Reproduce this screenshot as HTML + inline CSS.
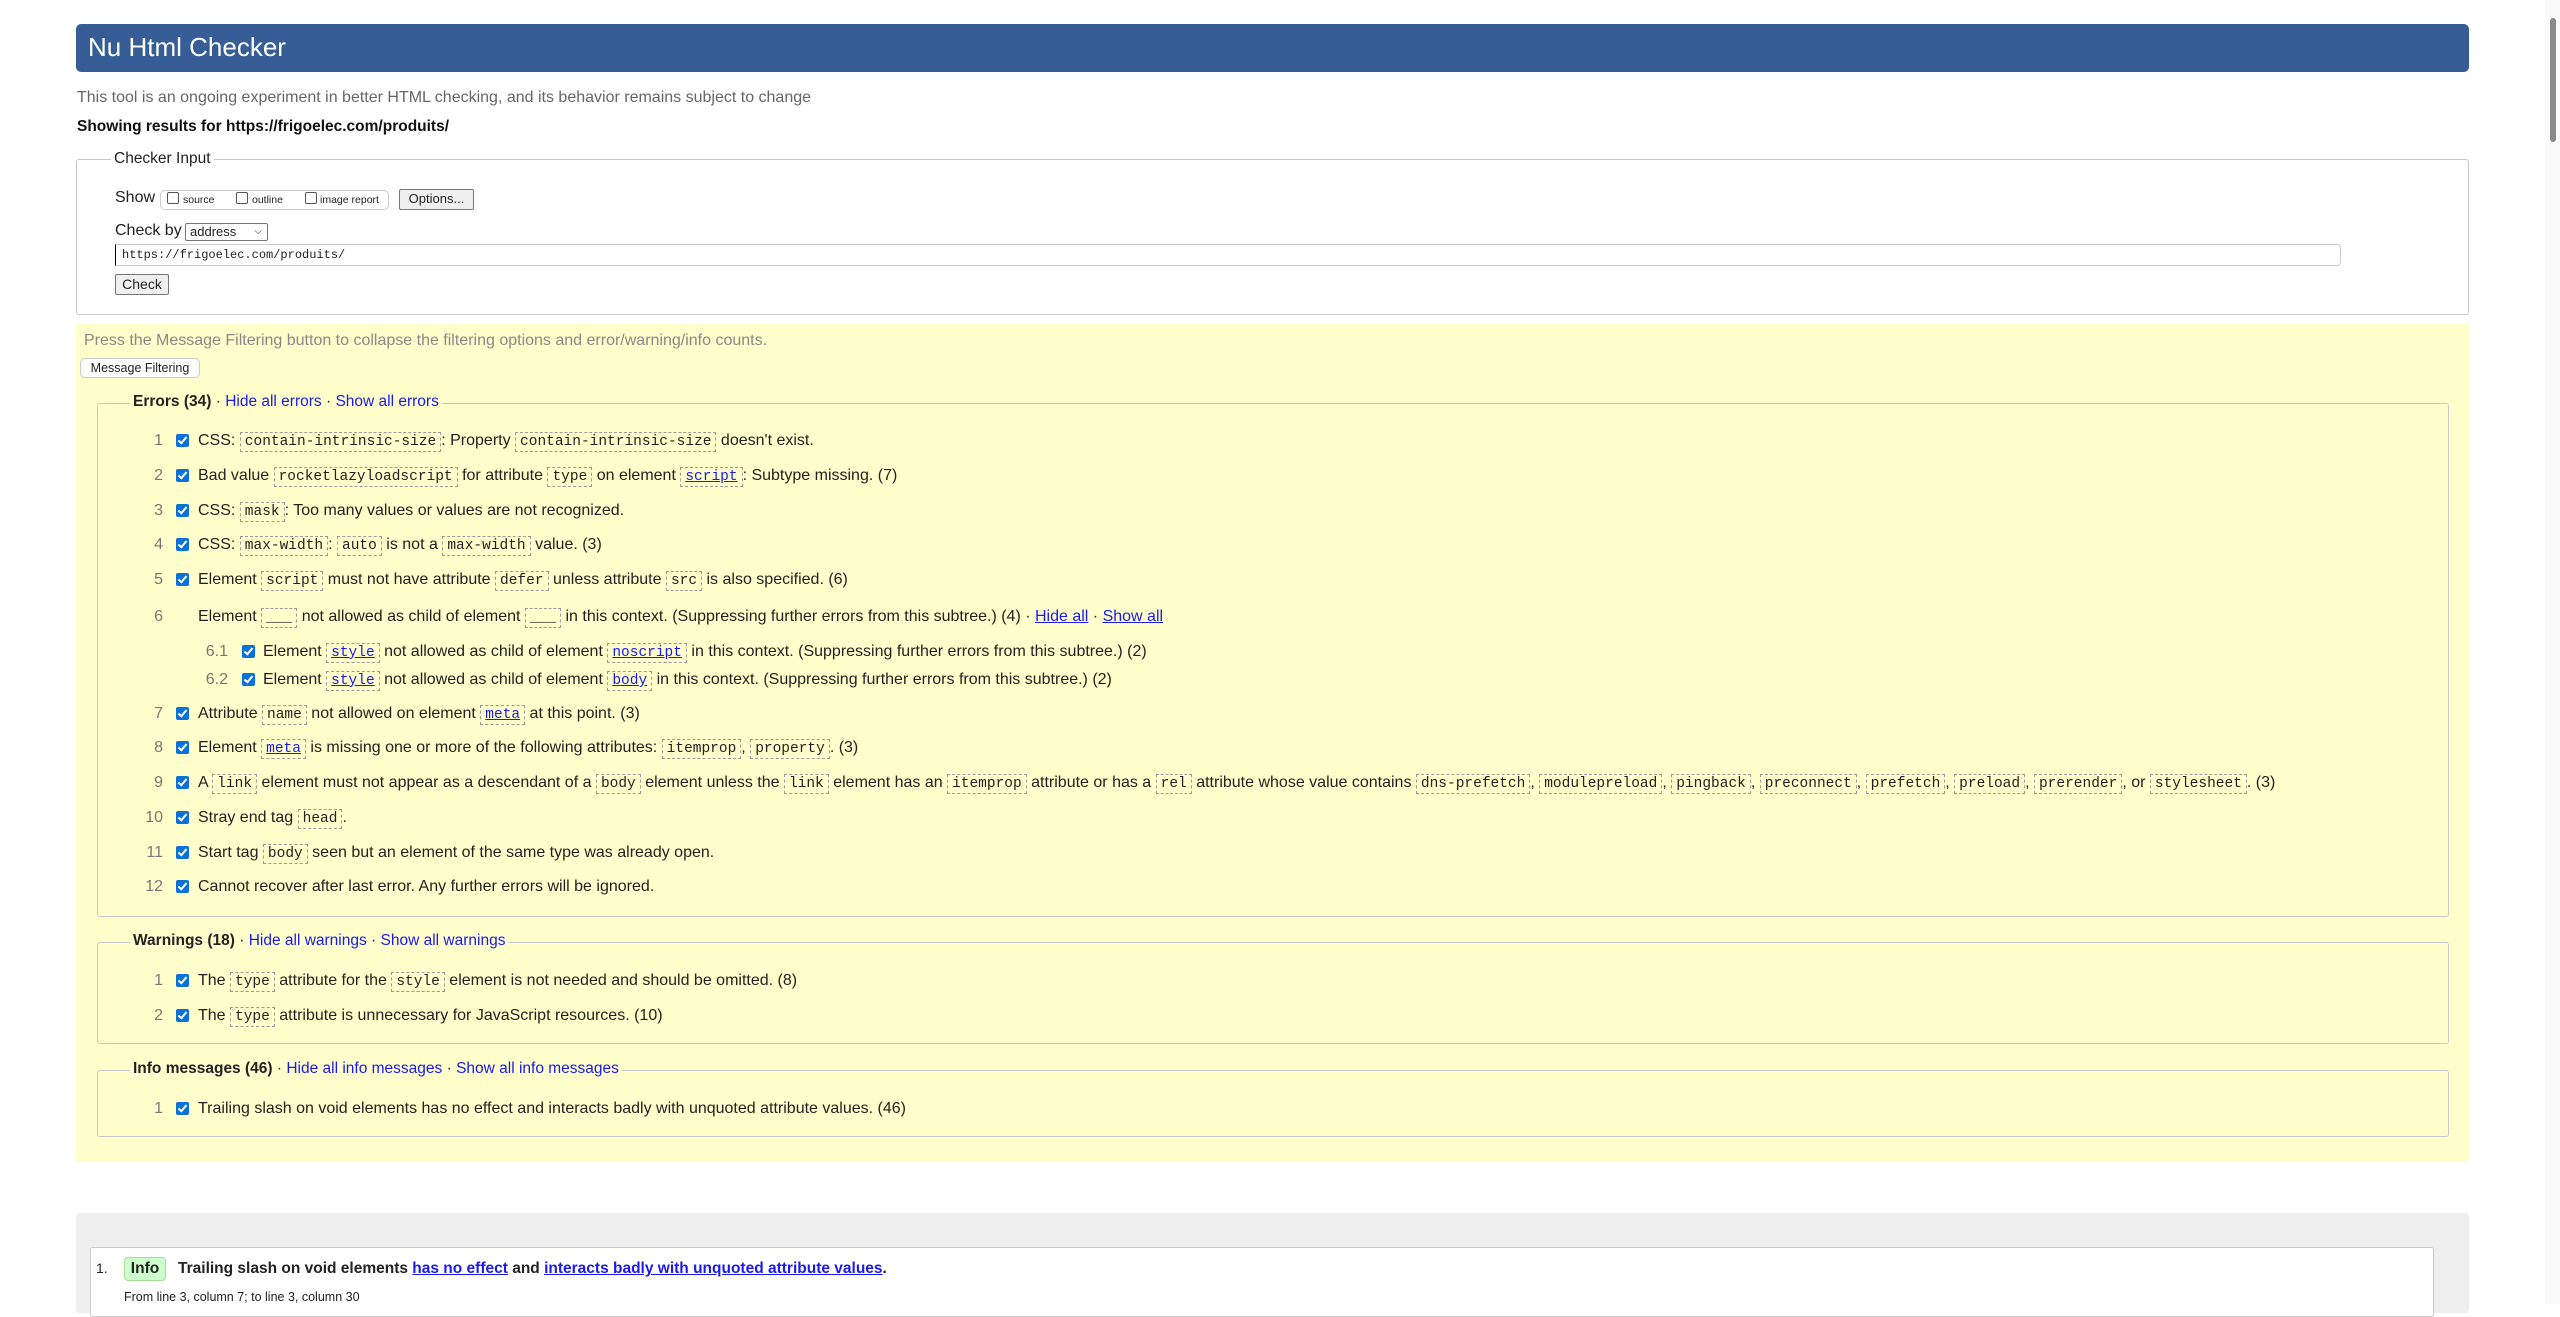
<!DOCTYPE html>
<html><head><meta charset="utf-8">
<style>
*{box-sizing:border-box}
html,body{margin:0;padding:0;background:#fff;width:2560px;height:1305px;overflow:hidden;font-family:"Liberation Sans",Arial,sans-serif;font-size:16px;color:#222}
.a{position:absolute;white-space:nowrap}
.hdr{left:76px;top:24px;width:2393px;height:48px;background:#365d95;border-radius:5px}
.hdr span{position:absolute;left:12px;top:8px;color:#fff;font-size:26px}
.fs{position:absolute;border:1px solid #c8c8c8;border-radius:3px}
code{font-family:"Liberation Mono",monospace;font-size:14.5px;border:1px dashed #999;padding:1px 4px;color:#222}
code a,a{color:#1a1aee}
code a{text-decoration:underline}
.row{position:absolute;height:24px;line-height:24px;white-space:nowrap}
.n{position:absolute;text-align:right;color:#777;width:40px}
.cb{position:absolute;top:5px;width:13px;height:13px;background:#0b70d8;border-radius:2px}
.cb:after{content:"";position:absolute;left:4px;top:1px;width:3px;height:7px;border:solid #fff;border-width:0 2.5px 2.5px 0;transform:rotate(40deg)}
.t{position:absolute}
.btn{position:absolute;background:#efefef;border:1px solid #767676;border-radius:2px;font-size:13px;line-height:18px;text-align:center}
.yl{background:#ffffcc}
.lgl a{text-decoration:none}
</style></head><body>
<div class="a hdr"><span>Nu Html Checker</span></div>
<div class="a" style="left:77px;top:89px;color:#666;font-size:16px">This tool is an ongoing experiment in better HTML checking, and its behavior remains subject to change</div>
<div class="a" style="left:77px;top:118px;font-weight:bold;font-size:15.5px;color:#111">Showing results for https://frigoelec.com/produits/</div>

<div class="fs" style="left:76px;top:159px;width:2393px;height:156px;background:#fff"></div>
<div class="a" style="left:111px;top:149px;background:#fff;padding:0 3px;line-height:20px;font-size:15.5px">Checker Input</div>
<div class="a" style="left:115px;top:188px;line-height:20px;font-size:16px">Show</div>
<div class="a" style="left:160px;top:190px;width:229px;height:20px;border:1px solid #ccc;border-radius:5px"></div>
<div class="a" style="left:167px;top:192px;width:12px;height:12px;border:1px solid #555;border-radius:2px"></div>
<div class="a" style="left:183px;top:193px;font-size:10.5px;line-height:14px">source</div>
<div class="a" style="left:236px;top:192px;width:12px;height:12px;border:1px solid #555;border-radius:2px"></div>
<div class="a" style="left:252px;top:193px;font-size:10.5px;line-height:14px">outline</div>
<div class="a" style="left:305px;top:192px;width:12px;height:12px;border:1px solid #555;border-radius:2px"></div>
<div class="a" style="left:320px;top:193px;font-size:10.5px;line-height:14px">image report</div>
<div class="btn" style="left:399px;top:189px;width:75px;height:21px">Options...</div>
<div class="a" style="left:115px;top:221px;line-height:20px;font-size:16px">Check by</div>
<div class="a" style="left:185px;top:223px;width:83px;height:18px;border:1px solid #767676;border-radius:2px;font-size:13px;line-height:16px;padding-left:4px">address<span style="position:absolute;right:5px;top:0;font-size:10px">&#9013;</span></div>
<div class="a" style="left:115px;top:244px;width:2226px;height:22px;border:1px solid #ccc;border-left:1px solid #000;border-radius:0 4px 4px 0;font-family:'Liberation Mono',monospace;font-size:12px;line-height:20px;padding-left:6px">https://frigoelec.com/produits/</div>
<div class="btn" style="left:115px;top:274px;width:54px;height:21px;font-size:14px">Check</div>

<div class="a yl" style="left:76px;top:324px;width:2393px;height:838px"></div>
<div class="a" style="left:84px;top:331px;color:#888;font-size:16px;line-height:20px">Press the Message Filtering button to collapse the filtering options and error/warning/info counts.</div>
<div class="a" style="left:80px;top:358px;width:120px;height:20px;background:#fff;border:1px solid #ccc;border-radius:5px;font-size:12.5px;line-height:18px;text-align:center">Message Filtering</div>

<div class="fs yl" style="left:97px;top:403px;width:2352px;height:514px"></div>
<div class="a lgl yl" style="left:130px;top:391px;padding:0 3px;line-height:22px;font-size:15.5px"><b>Errors (34)</b> · <a>Hide all errors</a> · <a>Show all errors</a></div>

<div class="row" style="left:0;top:429px"><span class="n" style="left:123px">1</span><span class="cb" style="left:176px"></span><span class="t" style="left:198px">CSS: <code>contain-intrinsic-size</code>: Property <code>contain-intrinsic-size</code> doesn't exist.</span></div>
<div class="row" style="left:0;top:464px"><span class="n" style="left:123px">2</span><span class="cb" style="left:176px"></span><span class="t" style="left:198px">Bad value <code>rocketlazyloadscript</code> for attribute <code>type</code> on element <code><a>script</a></code>: Subtype missing. (7)</span></div>
<div class="row" style="left:0;top:499px"><span class="n" style="left:123px">3</span><span class="cb" style="left:176px"></span><span class="t" style="left:198px">CSS: <code>mask</code>: Too many values or values are not recognized.</span></div>
<div class="row" style="left:0;top:533px"><span class="n" style="left:123px">4</span><span class="cb" style="left:176px"></span><span class="t" style="left:198px">CSS: <code>max-width</code>: <code>auto</code> is not a <code>max-width</code> value. (3)</span></div>
<div class="row" style="left:0;top:568px"><span class="n" style="left:123px">5</span><span class="cb" style="left:176px"></span><span class="t" style="left:198px">Element <code>script</code> must not have attribute <code>defer</code> unless attribute <code>src</code> is also specified. (6)</span></div>
<div class="row" style="left:0;top:605px"><span class="n" style="left:123px">6</span><span class="t" style="left:198px">Element <code>___</code> not allowed as child of element <code>___</code> in this context. (Suppressing further errors from this subtree.) (4) · <a style="text-decoration:underline">Hide all</a> · <a style="text-decoration:underline">Show all</a></span></div>
<div class="row" style="left:0;top:640px"><span class="n" style="left:188px">6.1</span><span class="cb" style="left:242px"></span><span class="t" style="left:263px">Element <code><a>style</a></code> not allowed as child of element <code><a>noscript</a></code> in this context. (Suppressing further errors from this subtree.) (2)</span></div>
<div class="row" style="left:0;top:668px"><span class="n" style="left:188px">6.2</span><span class="cb" style="left:242px"></span><span class="t" style="left:263px">Element <code><a>style</a></code> not allowed as child of element <code><a>body</a></code> in this context. (Suppressing further errors from this subtree.) (2)</span></div>
<div class="row" style="left:0;top:702px"><span class="n" style="left:123px">7</span><span class="cb" style="left:176px"></span><span class="t" style="left:198px">Attribute <code>name</code> not allowed on element <code><a>meta</a></code> at this point. (3)</span></div>
<div class="row" style="left:0;top:736px"><span class="n" style="left:123px">8</span><span class="cb" style="left:176px"></span><span class="t" style="left:198px">Element <code><a>meta</a></code> is missing one or more of the following attributes: <code>itemprop</code>, <code>property</code>. (3)</span></div>
<div class="row" style="left:0;top:771px"><span class="n" style="left:123px">9</span><span class="cb" style="left:176px"></span><span class="t" style="left:198px">A <code>link</code> element must not appear as a descendant of a <code>body</code> element unless the <code>link</code> element has an <code>itemprop</code> attribute or has a <code>rel</code> attribute whose value contains <code>dns-prefetch</code>, <code>modulepreload</code>, <code>pingback</code>, <code>preconnect</code>, <code>prefetch</code>, <code>preload</code>, <code>prerender</code>, or <code>stylesheet</code>. (3)</span></div>
<div class="row" style="left:0;top:806px"><span class="n" style="left:123px">10</span><span class="cb" style="left:176px"></span><span class="t" style="left:198px">Stray end tag <code>head</code>.</span></div>
<div class="row" style="left:0;top:841px"><span class="n" style="left:123px">11</span><span class="cb" style="left:176px"></span><span class="t" style="left:198px">Start tag <code>body</code> seen but an element of the same type was already open.</span></div>
<div class="row" style="left:0;top:875px"><span class="n" style="left:123px">12</span><span class="cb" style="left:176px"></span><span class="t" style="left:198px">Cannot recover after last error. Any further errors will be ignored.</span></div>

<div class="fs yl" style="left:97px;top:942px;width:2352px;height:102px"></div>
<div class="a lgl yl" style="left:130px;top:930px;padding:0 3px;line-height:22px;font-size:15.5px"><b>Warnings (18)</b> · <a>Hide all warnings</a> · <a>Show all warnings</a></div>
<div class="row" style="left:0;top:969px"><span class="n" style="left:123px">1</span><span class="cb" style="left:176px"></span><span class="t" style="left:198px">The <code>type</code> attribute for the <code>style</code> element is not needed and should be omitted. (8)</span></div>
<div class="row" style="left:0;top:1004px"><span class="n" style="left:123px">2</span><span class="cb" style="left:176px"></span><span class="t" style="left:198px">The <code>type</code> attribute is unnecessary for JavaScript resources. (10)</span></div>

<div class="fs yl" style="left:97px;top:1070px;width:2352px;height:67px"></div>
<div class="a lgl yl" style="left:130px;top:1058px;padding:0 3px;line-height:22px;font-size:15.5px"><b>Info messages (46)</b> · <a>Hide all info messages</a> · <a>Show all info messages</a></div>
<div class="row" style="left:0;top:1097px"><span class="n" style="left:123px">1</span><span class="cb" style="left:176px"></span><span class="t" style="left:198px">Trailing slash on void elements has no effect and interacts badly with unquoted attribute values. (46)</span></div>

<div class="a" style="left:76px;top:1213px;width:2393px;height:100px;background:#eee;border-radius:4px"></div>
<div class="a" style="left:90px;top:1247px;width:2344px;height:70px;background:#fff;border:1px solid #ccc;border-radius:3px"></div>
<div class="a" style="left:96px;top:1259px;font-size:14px;line-height:18px">1.</div>
<div class="a" style="left:124px;top:1257px;width:42px;height:24px;background:#ccffcc;border:1px solid #aadd99;border-radius:4px;font-weight:bold;font-size:15.5px;line-height:22px;text-align:center">Info</div>
<div class="a" style="left:178px;top:1258px;font-size:15.5px;line-height:22px"><b>Trailing slash on void elements <a style="text-decoration:underline">has no effect</a> and <a style="text-decoration:underline">interacts badly with unquoted attribute values</a>.</b></div>
<div class="a" style="left:124px;top:1289px;font-size:12.5px;line-height:16px">From line 3, column 7; to line 3, column 30</div>

<div class="a" style="left:2545px;top:0;width:15px;height:1305px;background:#fafafa"></div>
<div class="a" style="left:2550px;top:18px;width:6px;height:124px;background:#8a8a8a;border-radius:3px"></div>
</body></html>
